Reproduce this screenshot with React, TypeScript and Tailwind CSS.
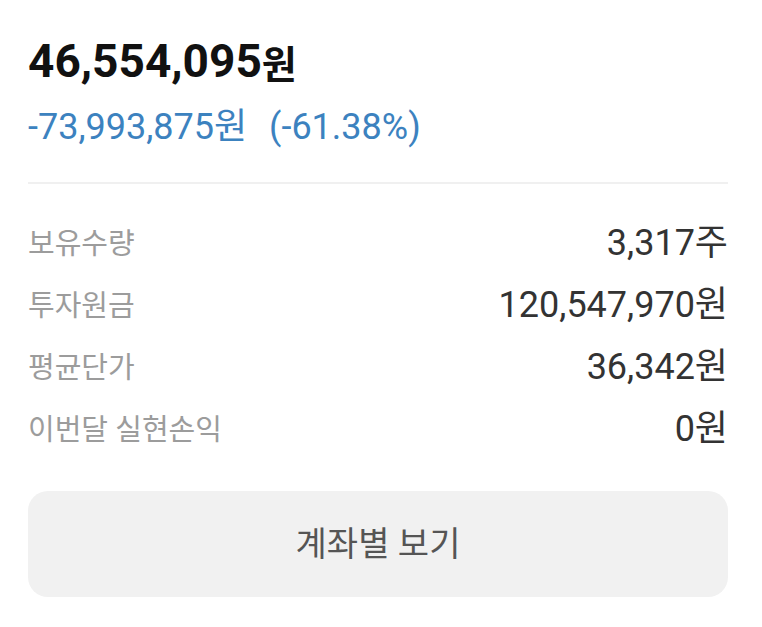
export default function App() {
  const rows = [
    { label: "보유수량", value: "3,317주" },
    { label: "투자원금", value: "120,547,970원" },
    { label: "평균단가", value: "36,342원" },
    { label: "이번달 실현손익", value: "0원" },
  ];

  return (
    <div
      className="w-[762px] h-[627px] bg-white pl-[28px] pr-[34px] pt-[38px] overflow-hidden"
      style={{ fontFamily: 'Roboto, "Noto Sans CJK KR", sans-serif' }}
    >
      {/* Evaluation amount */}
      <div className="h-[46px] flex items-end leading-none text-[46px] font-bold text-[#111]">
        46,554,095<span className="text-[38px] font-semibold">원</span>
      </div>

      {/* Profit / loss */}
      <div className="mt-[24px] h-[37px] flex items-center leading-none text-[36px] text-[#3c82bf]">
        -73,993,875원
        <span className="ml-[22px]">(-61.38%)</span>
      </div>

      <div className="mt-[37px] h-[2px] bg-[#f0f0f0]" />

      {/* Detail rows */}
      <div className="mt-[28px] flex flex-col">
        {rows.map((r) => (
          <div key={r.label} className="h-[62px] flex items-center justify-between leading-none">
            <span className="text-[29px] text-[#9c9c9c] pt-[3px]">{r.label}</span>
            <span className="text-[36px] text-[#333]">{r.value}</span>
          </div>
        ))}
      </div>

      <button
        type="button"
        className="mt-[31px] w-full h-[106px] rounded-[20px] bg-[#f1f1f1] flex items-center justify-center text-[34px] text-[#555] leading-none"
      >
        계좌별 보기
      </button>
    </div>
  );
}
